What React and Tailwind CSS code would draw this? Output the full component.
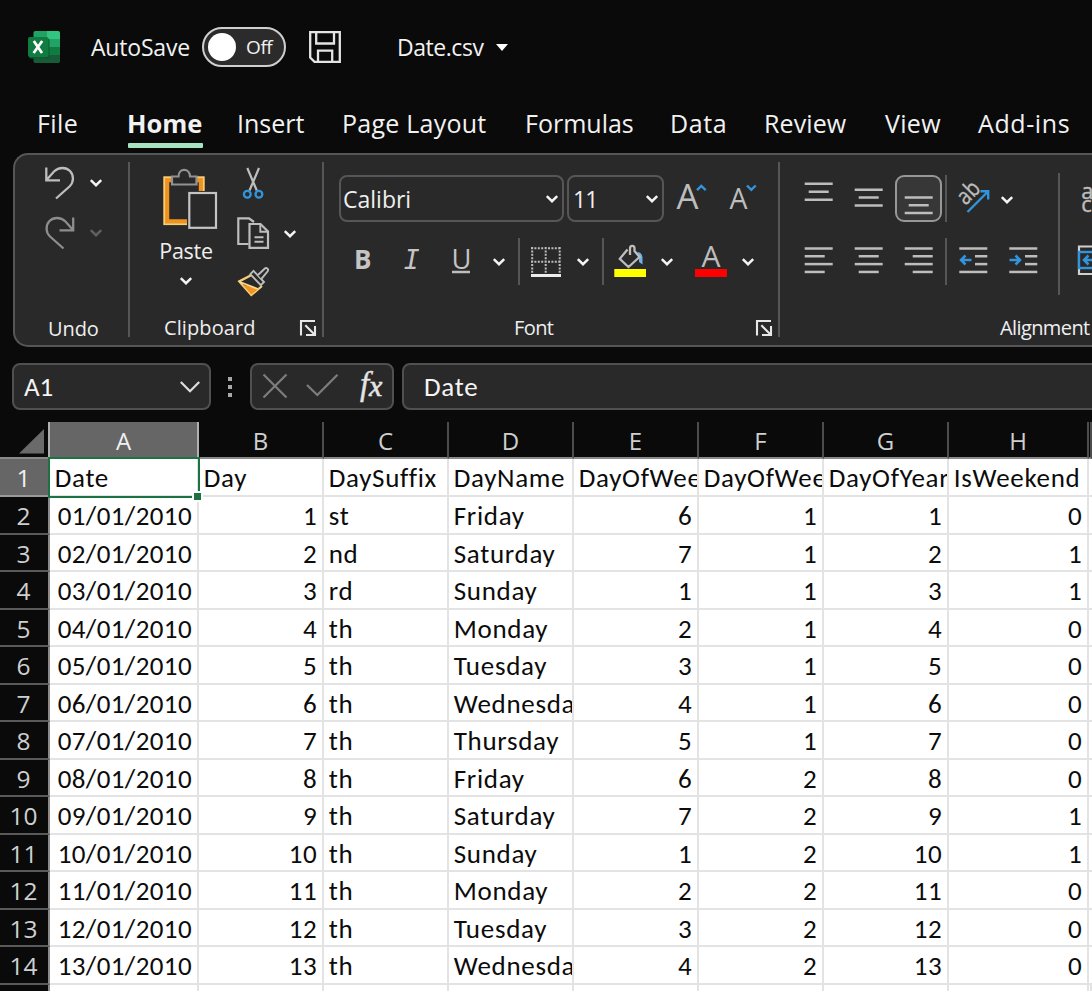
import React from 'react';

const UI = "font-['Open_Sans','Noto_Sans',sans-serif]";
const GREY = '#bdbdbd';
const BLUE = '#3294dc';

function Art({ box, className = '', children }) {
  const [, , w, h] = box;
  return (
    <svg width={w} height={h} viewBox={box.join(' ')} fill="none" className={'shrink-0 ' + className}>
      {children}
    </svg>
  );
}

function Chevron({ className = '', color = '#f4f4f4' }) {
  return (
    <svg width="14" height="10" viewBox="0 0 14 10" fill="none" className={'shrink-0 ' + className}>
      <path d="M1.8 2.2L7 7.2L12.2 2.2" stroke={color} strokeWidth="2.5" />
    </svg>
  );
}

function Lines({ rows, y0, gap }) {
  return (
    <>
      {rows.map(([a, b], i) => (
        <path key={i} d={`M${a} ${y0 + i * gap}H${b}`} stroke={GREY} strokeWidth="2.5" />
      ))}
    </>
  );
}

function Launcher({ className }) {
  return (
    <svg width="18" height="18" viewBox="0 0 18 18" fill="none" className={'shrink-0 ' + className}>
      <path d="M2 16.5V2H16M6.3 6.3L15 15M16 7V16H7" stroke="#e8e8e8" strokeWidth="2.1" />
    </svg>
  );
}

const GroupRule = () => <div className="mt-[7px] h-[175px] w-[2px] shrink-0 bg-[#565656]" />;
const SmallRule = ({ className = '' }) => <div className={'h-[47px] w-[2px] shrink-0 bg-[#565656] ' + className} />;

function TitleBar() {
  return (
    <div className="flex h-[94px] items-center pl-7 text-[23px] leading-8 text-[#f2f2f2]">
      <svg width="32" height="32" viewBox="0 0 32 32" className="shrink-0">
        <defs>
          <clipPath id="sheet"><rect x="5.5" y="0" width="26.5" height="32" rx="1.8" /></clipPath>
        </defs>
        <g clipPath="url(#sheet)">
          <rect x="5" width="14" height="8" fill="#21a366" />
          <rect x="19" width="13" height="8" fill="#33c481" />
          <rect x="5" y="8" width="14" height="8" fill="#107c41" />
          <rect x="19" y="8" width="13" height="8" fill="#21a366" />
          <rect x="5" y="16" width="14" height="8" fill="#185c37" />
          <rect x="19" y="16" width="13" height="8" fill="#107c41" />
          <rect x="5" y="24" width="27" height="8" fill="#185c37" />
        </g>
        <rect x="1" y="7.5" width="20.5" height="20" rx="2" fill="#0b5a30" />
        <rect x="0" y="6" width="20.5" height="20" rx="2" fill="#107c41" />
        <path d="M5.8 10L14 22M14.2 10L5.6 22" stroke="#fff" strokeWidth="2.7" />
      </svg>
      <span className="ml-[31px] w-[111px] tracking-[-0.2px]">AutoSave</span>
      <div className="-mt-px flex h-10 w-[84px] items-center rounded-full border-2 border-[#cfcfcf] bg-[#2b2b2b] pl-1">
        <div className="h-[28px] w-[28px] rounded-full bg-white" />
        <span className="ml-[10px] text-[19px] leading-7 tracking-[-0.4px]">Off</span>
      </div>
      <svg width="34" height="34" viewBox="0 0 34 34" fill="none" className="ml-[22px] shrink-0">
        <path d="M2.2 2.2H31.8V31.8H6.5L2.2 27.5Z" stroke="#e4e4e4" strokeWidth="2.3" />
        <path d="M8.2 2V13.5H26V2M10 32V20.7H24.2V32" stroke="#e4e4e4" strokeWidth="2.3" />
      </svg>
      <span className="ml-[55px] w-[99px] tracking-[-0.45px]">Date.csv</span>
      <svg width="12" height="7" viewBox="0 0 12 7" className="shrink-0"><path d="M0 0H12L6 7Z" fill="#fff" /></svg>
    </div>
  );
}

const TABS = [
  ['File', 'w-[90px] tracking-[0.4px]'],
  ['Home', 'w-[110px] text-[25.5px] font-bold'],
  ['Insert', 'w-[105px]'],
  ['Page Layout', 'w-[183px] tracking-[0.25px]'],
  ['Formulas', 'w-[145px]'],
  ['Data', 'w-[94px] tracking-[0.6px]'],
  ['Review', 'w-[121px] tracking-[0.1px]'],
  ['View', 'w-[93px] tracking-[0.3px]'],
  ['Add-ins', 'w-[110px] tracking-[0.6px]'],
];

function Tabs() {
  return (
    <div className="flex h-[59px] pl-[37px] pt-[11px] text-[25px] font-[450] leading-9 text-[#f2f2f2]">
      {TABS.map(([name, cls]) => (
        <div key={name} className={'shrink-0 whitespace-nowrap ' + cls}>
          {name}
          {name === 'Home' && <div className="ml-px mt-[2px] h-[5px] w-[75px] rounded-[1px] bg-[#a6e3c0]" />}
        </div>
      ))}
    </div>
  );
}

function UndoGroup() {
  const hook = 'M46.3 167.5V180.3H60M46.5 180L54 171.5C59 166.8 66 167 70 171C74 175.2 74 182.5 69.5 186.5L56 198.5';
  return (
    <div className="flex w-[113px] shrink-0 flex-col pl-7">
      <div className="mt-[10px] flex h-9 items-center">
        <Art box={[43, 165, 34, 36]}><path d={hook} stroke={GREY} strokeWidth="2.3" /></Art>
        <Chevron className="ml-3" />
      </div>
      <div className="mt-[14px] flex h-9 items-center">
        <Art box={[43, 165, 34, 36]}>
          <path d={hook} stroke="#8d8d8d" strokeWidth="2.3" transform="translate(119.5 0) scale(-1 1)" />
        </Art>
        <Chevron className="ml-3" color="#606060" />
      </div>
      <span className="mt-auto pb-[2px] pl-[5px] text-[20px] leading-[29px] tracking-[-0.1px]">Undo</span>
    </div>
  );
}

function ClipboardGroup() {
  return (
    <div className="flex w-[192px] shrink-0 flex-col">
      <div className="flex h-[150px]">
        <div className="flex w-[106px] flex-col items-center pl-[5px] pt-[11px]">
          <Art box={[160, 166, 60, 66]} className="ml-[7px]">
            <rect x="168" y="180" width="34" height="41.5" stroke="#f0931e" strokeWidth="4.5" />
            <rect x="165.2" y="177.2" width="39.6" height="47" stroke="#f7cd76" strokeWidth="1.8" />
            <path d="M173 184.5V176.5H179.5C179.5 172.5 182 169.8 185.2 169.8S191 172.5 191 176.5H197.5V184.5Z" fill="#292929" stroke="#929292" strokeWidth="2.2" />
            <rect x="188" y="191" width="32" height="41" fill="#292929" />
            <rect x="190.3" y="193" width="26.7" height="34.8" stroke="#c4c4c4" strokeWidth="2.2" />
          </Art>
          <span className="mt-1 pl-px text-[21.5px] font-[450] leading-[30px] tracking-[-0.3px]">Paste</span>
          <Chevron className="mt-[10px]" />
        </div>
        <div className="flex flex-col pt-[9px]">
          <Art box={[236, 164, 34, 40]}>
            <path d="M247.3 168L256.8 190.5M259 168L249.5 190.5" stroke={GREY} strokeWidth="2.2" />
            <circle cx="247.3" cy="194.3" r="3.4" stroke={BLUE} strokeWidth="2.3" />
            <circle cx="258.9" cy="194.3" r="3.4" stroke={BLUE} strokeWidth="2.3" />
          </Art>
          <div className="mt-[9px] flex items-center">
            <Art box={[236, 213, 34, 42]}>
              <path d="M248.5 244H238.3V218.3H249L254 222" stroke={GREY} strokeWidth="2.2" />
              <path d="M249.5 224H260.5L268 231.5V247.8H249.5Z" stroke={GREY} strokeWidth="2.2" />
              <path d="M260.3 224V231.7H268M254.5 237.3H263.5M254.5 241.8H263.5" stroke={GREY} strokeWidth="1.9" />
            </Art>
            <Chevron className="ml-[12.5px]" />
          </div>
          <Art box={[236, 264, 34, 34]} className="mt-[9px]">
            <path d="M251 275.3L239.2 281.4L251.3 295L262 286" stroke="#f5cf7a" strokeWidth="2.2" fill="none" />
            <path d="M242.5 284.5L258.8 288.6L251.3 294.5Z" fill="#f3951f" />
            <path d="M240 282L258 289" stroke="#f9d98f" strokeWidth="1.8" />
            <path d="M253.5 270.8L264 282L260.8 285.2L250.3 274.2Z" fill="#292929" stroke={GREY} strokeWidth="1.9" />
            <path d="M258 275L264.6 268.7C266.6 266.8 269.4 269.6 267.4 271.6L261.4 278.8" fill="#292929" stroke={GREY} strokeWidth="1.9" />
          </Art>
        </div>
      </div>
      <div className="mt-auto flex pb-[3px] pl-[34px]">
        <span className="w-[135px] text-[20px] font-[450] leading-[29px] tracking-[0.1px]">Clipboard</span>
        <Launcher className="mt-[6px]" />
      </div>
    </div>
  );
}

function FontGroup() {
  return (
    <div className="flex w-[454px] shrink-0 flex-col">
      <div className="mt-5 flex pl-[15px]">
        <div className="flex h-[47px] w-[225px] items-center justify-between rounded-lg border-2 border-[#565656] pl-[2px] pr-[3px] text-[23px] leading-8">
          <span>Calibri</span>
          <Chevron />
        </div>
        <div className="ml-[3px] flex h-[47px] w-[97px] items-center justify-between rounded-lg border-2 border-[#565656] pl-1 pr-[3px] text-[23px] leading-8">
          <span className="tracking-[-1px]">11</span>
          <Chevron />
        </div>
        <Art box={[672, 172, 40, 50]} className="-mt-[3px] ml-2">
          <text x="676.5" y="209" fontSize="35" fill={GREY} className="font-['Open_Sans',sans-serif]" textLength="22" lengthAdjust="spacingAndGlyphs">A</text>
          <path d="M697 190.2L701.3 186L705.7 190.2" stroke={BLUE} strokeWidth="2.4" />
        </Art>
        <Art box={[722, 175, 40, 47]} className="ml-[10px]">
          <text x="729.5" y="209" fontSize="28.5" fill={GREY} className="font-['Open_Sans',sans-serif]" textLength="18" lengthAdjust="spacingAndGlyphs">A</text>
          <path d="M747 185.5L751.3 189.8L755.7 185.5" stroke={BLUE} strokeWidth="2.4" />
        </Art>
      </div>
      <div className="mt-4 flex items-center">
        <Art box={[324, 238, 168, 47]}>
          <text x="354" y="269" fontSize="27" fontWeight="700" fill="#c4c4c4" className="font-['Open_Sans',sans-serif]" textLength="17.5" lengthAdjust="spacingAndGlyphs">B</text>
          <text x="403.8" y="268.7" fontSize="27" fontStyle="italic" fill="#c4c4c4" className="font-['DejaVu_Sans_Mono',monospace]" textLength="16" lengthAdjust="spacingAndGlyphs">I</text>
          <text x="451.5" y="268.5" fontSize="27" fill="#c4c4c4" className="font-['Open_Sans',sans-serif]" textLength="20" lengthAdjust="spacingAndGlyphs">U</text>
          <path d="M452 272H470" stroke={GREY} strokeWidth="2.5" />
        </Art>
        <Chevron />
        <SmallRule className="ml-[12px]" />
        <Art box={[529, 243, 34, 34]} className="ml-[9px]">
          <path d="M531 246.3H561M531 259.8H561M532.2 245V272M545.7 245V272M559.7 245V272" stroke={GREY} strokeWidth="2" strokeDasharray="2 1.4" />
          <path d="M531 273.5H561" stroke="#ececec" strokeWidth="3" />
        </Art>
        <Chevron className="ml-[13px]" />
        <SmallRule className="ml-[12px]" />
        <Art box={[613, 238, 36, 47]} className="ml-[8px]">
          <path d="M637 253C640.5 251 643.5 254 643.5 258V264.5L640 262V257Z" fill="#6fb2e6" />
          <path d="M628.5 249.5L620.8 258.8L629.5 267L640.5 257L635.5 251V248.5C635.5 245 631 245 631 248.5V255" stroke={GREY} strokeWidth="2.3" />
          <rect x="615.3" y="269" width="31.7" height="8" fill="#ffff00" />
        </Art>
        <Chevron className="ml-[12px]" />
        <Art box={[693, 238, 36, 47]} className="ml-[19px]">
          <text x="701.5" y="266.8" fontSize="29" fill={GREY} className="font-['Open_Sans',sans-serif]" textLength="19" lengthAdjust="spacingAndGlyphs">A</text>
          <rect x="695" y="269" width="32" height="8" fill="#ff0000" />
        </Art>
        <Chevron className="ml-[12px]" />
      </div>
      <div className="mt-auto flex pb-[3px] pl-[190px]">
        <span className="w-[241px] text-[20px] font-[450] leading-[29px] tracking-[-0.6px]">Font</span>
        <Launcher className="mt-[6px]" />
      </div>
    </div>
  );
}

function AlignmentGroup() {
  return (
    <div className="flex flex-1 flex-col">
      <div className="flex h-[140px] pt-[18px]">
        <div className="flex w-[278px] shrink-0 flex-col">
          <div className="mt-[2px] flex">
            <Art box={[800, 175, 36, 47]} className="ml-5">
              <Lines y0={183.7} gap={8} rows={[[804.7, 832.7], [808.7, 828.7], [804.7, 832.7]]} />
            </Art>
            <Art box={[850, 175, 36, 47]} className="ml-[14px]">
              <Lines y0={189.7} gap={7.9} rows={[[854.7, 882.7], [858.7, 878.7], [854.7, 882.7]]} />
            </Art>
            <div className="ml-[9px] flex h-[47px] w-[47px] items-center justify-center rounded-[9px] border-2 border-[#979797] bg-[#373737]">
              <Art box={[900, 177, 38, 43]}>
                <Lines y0={197.5} gap={7.8} rows={[[904.7, 932.7], [908.7, 928.7], [904.7, 932.7]]} />
              </Art>
            </div>
            <SmallRule className="ml-[3px]" />
            <Art box={[954, 175, 40, 47]} className="ml-[7px]">
              <text x="0" y="0" fontSize="23" fill={GREY} stroke={GREY} strokeWidth="0.4" transform="translate(965.5 206) rotate(-45)" className="font-['Open_Sans',sans-serif]" textLength="23" lengthAdjust="spacingAndGlyphs">ab</text>
              <path d="M967.5 212L988 191.5M980.5 191.3H988.2V199.5" stroke={BLUE} strokeWidth="2.4" />
            </Art>
            <Chevron className="ml-[5.5px] mt-[20px]" />
          </div>
          <div className="mt-4 flex">
            <Art box={[800, 238, 36, 47]} className="ml-5">
              <Lines y0={248.4} gap={7.85} rows={[[804.7, 832.7], [804.7, 824.7], [804.7, 832.7], [804.7, 824.7]]} />
            </Art>
            <Art box={[850, 238, 36, 47]} className="ml-[14px]">
              <Lines y0={248.4} gap={7.85} rows={[[854.7, 882.7], [858.7, 878.7], [854.7, 882.7], [858.7, 878.7]]} />
            </Art>
            <Art box={[900, 238, 36, 47]} className="ml-[14px]">
              <Lines y0={248.4} gap={7.85} rows={[[904.7, 932.7], [912.7, 932.7], [904.7, 932.7], [912.7, 932.7]]} />
            </Art>
            <SmallRule className="ml-[9px]" />
            <Art box={[955, 238, 36, 47]} className="ml-[8px]">
              <Lines y0={248.4} gap={7.85} rows={[[959.3, 987.3], [975, 987.3], [975, 987.3], [959.3, 987.3]]} />
              <path d="M971.5 260H961M965.5 255.5L961 260L965.5 264.5" stroke={BLUE} strokeWidth="2.5" />
            </Art>
            <Art box={[1005, 238, 36, 47]} className="ml-[14px]">
              <Lines y0={248.4} gap={7.85} rows={[[1009.3, 1037.3], [1025, 1037.3], [1025, 1037.3], [1009.3, 1037.3]]} />
              <path d="M1009.5 260H1020M1015.5 255.5L1020 260L1015.5 264.5" stroke={BLUE} strokeWidth="2.5" />
            </Art>
          </div>
        </div>
        <div className="h-[122px] w-[2px] shrink-0 bg-[#565656]" />
        <div className="ml-[15px] flex flex-col">
          <Art box={[1075, 175, 17, 47]} className="mt-[2px]">
            <g className="font-['Open_Sans',sans-serif]" fontSize="22" fill={GREY} stroke={GREY} strokeWidth="0.4">
              <text x="1081.3" y="198.5">a</text>
              <text x="1081.3" y="212.2">c</text>
            </g>
          </Art>
          <Art box={[1075, 238, 17, 47]} className="mt-4">
            <path d="M1095 246.5H1079V274H1095" stroke="#d0d0d0" strokeWidth="2.2" />
            <rect x="1079" y="252" width="30" height="16" fill="#292929" stroke={BLUE} strokeWidth="2.4" />
            <path d="M1095 260H1084M1088.5 255.5L1084 260L1088.5 264.5" stroke={BLUE} strokeWidth="2.5" />
          </Art>
        </div>
      </div>
      <span className="mt-auto pb-[3px] pl-[220px] text-[20px] font-[450] leading-[29px] tracking-[-0.6px]">Alignment</span>
    </div>
  );
}

function FormulaBar() {
  const box = 'flex h-[47px] shrink-0 items-center rounded-lg border-2 border-[#505050] bg-[#292929] ';
  return (
    <div className="mt-[16px] flex pl-[12px] font-['Carlito','Lato',sans-serif] text-[27px] leading-8 text-[#f4f4f4]">
      <div className={box + 'w-[199px] justify-between pl-[10px] pr-2'}>
        <span>A1</span>
        <svg width="22" height="14" viewBox="0 0 22 14" fill="none"><path d="M1.8 2L11 11.2L20.2 2" stroke="#dedede" strokeWidth="2.2" /></svg>
      </div>
      <div className="ml-[17px] mt-[14px] flex flex-col gap-1">
        <i className="h-1 w-1 bg-[#a8a8a8]" /><i className="h-1 w-1 bg-[#a8a8a8]" /><i className="h-1 w-1 bg-[#a8a8a8]" />
      </div>
      <div className={box + 'ml-[18px] w-[144px]'}>
        <Art box={[252, 365, 140, 43]}>
          <path d="M263.5 374.5L286.5 397.5M286.5 374.5L263.5 397.5M307 385L317.3 395L337.5 374.8" stroke="#7d7d7d" strokeWidth="2.2" />
          <text x="360" y="394.5" fontSize="33" fontStyle="italic" fill="#e4e4e4" stroke="#e4e4e4" strokeWidth="0.4" className="font-['Liberation_Serif',serif]">f</text>
          <text x="369" y="396" fontSize="30" fontStyle="italic" fill="#e4e4e4" stroke="#e4e4e4" strokeWidth="0.6" className="font-['Liberation_Serif',serif]">x</text>
        </Art>
      </div>
      <div className={box + 'ml-2 w-[710px] pl-5 tracking-[0.75px]'}>Date</div>
    </div>
  );
}

const COLS = ['A', 'B', 'C', 'D', 'E', 'F', 'G', 'H', ''];
const HEAD = ['Date', 'Day', 'DaySuffix', 'DayName', 'DayOfWeek', 'DayOfWeek', 'DayOfYear', 'IsWeekend', ''];
const ROWS = [
  ['01/01/2010', 1, 'st', 'Friday', 6, 1, 1, 0],
  ['02/01/2010', 2, 'nd', 'Saturday', 7, 1, 2, 1],
  ['03/01/2010', 3, 'rd', 'Sunday', 1, 1, 3, 1],
  ['04/01/2010', 4, 'th', 'Monday', 2, 1, 4, 0],
  ['05/01/2010', 5, 'th', 'Tuesday', 3, 1, 5, 0],
  ['06/01/2010', 6, 'th', 'Wednesday', 4, 1, 6, 0],
  ['07/01/2010', 7, 'th', 'Thursday', 5, 1, 7, 0],
  ['08/01/2010', 8, 'th', 'Friday', 6, 2, 8, 0],
  ['09/01/2010', 9, 'th', 'Saturday', 7, 2, 9, 1],
  ['10/01/2010', 10, 'th', 'Sunday', 1, 2, 10, 1],
  ['11/01/2010', 11, 'th', 'Monday', 2, 2, 11, 0],
  ['12/01/2010', 12, 'th', 'Tuesday', 3, 2, 12, 0],
  ['13/01/2010', 13, 'th', 'Wednesday', 4, 2, 13, 0],
];
const GRID = 'grid grid-rows-[100%] grid-cols-[50px_149px_125px_125px_125px_125px_125px_125px_140px_3px] ';

function Cell({ text, left }) {
  return (
    <div className={'overflow-hidden whitespace-nowrap border-b-2 border-r-2 border-[#e3e3e3] ' + (left ? 'pl-[4.7px] tracking-[0.7px]' : 'pr-[5px] text-right tracking-[0.4px]')}>
      {text}
    </div>
  );
}

function RowHead({ n, active }) {
  return (
    <div className={UI + ' border-b-2 border-r-2 pr-px text-center text-[24.5px] ' + (active ? 'border-[#9a9a9a] bg-[#666] leading-[37px] text-[#f0f0f0]' : 'border-[#5a5a5a] border-r-[#8a8a8a] bg-[#0a0a0a] leading-[37px] text-[#cfcfcf]')}>
      {n}
    </div>
  );
}

function Sheet() {
  return (
    <div className="mt-3 bg-white font-['Carlito','Lato',sans-serif] text-[27px] leading-[37px] text-[#0c0c0c]">
      <div className={GRID + UI + ' h-[37px] bg-[#0a0a0a] text-center text-[24px] leading-[38px] text-[#cfcfcf]'}>
        <div className="border-b-2 border-r-2 border-b-[#8a8a8a] border-r-[#b0b0b0]">
          <svg width="46" height="34" viewBox="0 0 46 34"><path d="M19 31.5L44 7V31.5Z" fill="#6a6a6a" /></svg>
        </div>
        {COLS.map((c, i) => (
          <div key={i} className={'border-b-2 border-r-2 border-b-[#8a8a8a] ' + (i === 0 ? 'border-r-[#b0b0b0] bg-[#666] text-[#f0f0f0]' : 'border-r-[#4c4c4c]')}>{c}</div>
        ))}
      </div>
      <div className={GRID + 'relative h-[38px] leading-[38px]'}>
        <RowHead n={1} active />
        {HEAD.map((h, i) => <Cell key={i} text={h} left />)}
        <div className="absolute left-[48px] top-[-2px] h-[41px] w-[152px] border-[2.5px] border-[#1b7243]" />
        <div className="absolute left-[192px] top-[32px] h-[11px] w-[11px] border-2 border-white bg-[#1b7243]" />
      </div>
      {ROWS.map((r, i) => (
        <div key={i} className={GRID + 'h-[37.5px]'}>
          <RowHead n={i + 2} />
          {r.map((v, j) => <Cell key={j} text={v} left={j === 2 || j === 3} />)}
          <Cell text="" />
        </div>
      ))}
      <div className={GRID + 'h-[7px]'}>
        <div className="border-r-2 border-[#8a8a8a] bg-[#0a0a0a]" />
        {COLS.map((c, i) => <div key={i} className="border-r-2 border-[#e3e3e3]" />)}
      </div>
    </div>
  );
}

export default function App() {
  return (
    <div className={UI + ' h-[991px] w-[1092px] overflow-hidden bg-[#0a0a0a]'}>
      <TitleBar />
      <Tabs />
      <div className="ml-[13px] flex h-[194px] overflow-hidden rounded-l-[15px] border-2 border-r-0 border-[#565656] bg-[#292929] text-[#efefef]">
        <UndoGroup />
        <GroupRule />
        <ClipboardGroup />
        <GroupRule />
        <FontGroup />
        <GroupRule />
        <AlignmentGroup />
      </div>
      <FormulaBar />
      <Sheet />
    </div>
  );
}
